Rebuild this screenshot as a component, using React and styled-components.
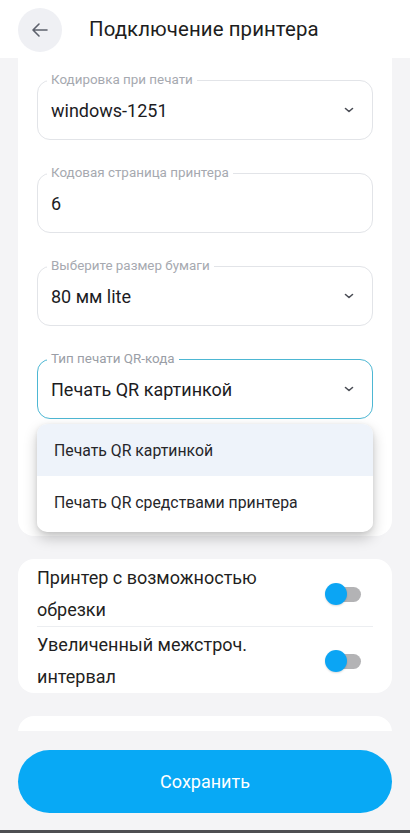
import React from "react";
import styled, { createGlobalStyle } from "styled-components";

const GlobalStyle = createGlobalStyle`
  html, body {
    margin: 0;
    padding: 0;
    background: #f4f4f6;
  }
  body {
    font-family: Roboto, "Noto Sans", "Liberation Sans", sans-serif;
    color: #1f1f22;
  }
`;

const Screen = styled.div`
  width: 410px;
  height: 833px;
  display: flex;
  flex-direction: column;
  background: #f4f4f6;
  overflow: hidden;
`;

const Header = styled.div`
  height: 58px;
  flex-shrink: 0;
  background: #ffffff;
  display: flex;
  align-items: center;
  padding: 0 18px;
  gap: 27px;
  box-sizing: border-box;
`;

const BackButton = styled.button`
  width: 44px;
  height: 44px;
  border-radius: 50%;
  border: none;
  background: #eff0f4;
  display: flex;
  align-items: center;
  justify-content: center;
  padding: 0;
  margin-top: 2px;
`;

const Title = styled.div`
  font-size: 20.4px;
  color: #1d1d20;
  letter-spacing: 0.1px;
`;

const Scroll = styled.div`
  flex: 1;
  overflow: hidden;
  display: flex;
  flex-direction: column;
  gap: 23px;
  padding: 0 18px;
`;

const Card = styled.div`
  background: #ffffff;
  border-radius: ${(p) => (p.$flatTop ? "0 0 16px 16px" : "16px")};
  padding: 0 19px;
  flex-shrink: 0;
  display: flex;
  flex-direction: column;
`;

const FormCard = styled(Card)`
  padding: 14px 19px 117px;
  gap: 25px;
`;

const FieldWrap = styled.div`
  position: relative;
`;

const Fieldset = styled.fieldset`
  margin: 0;
  padding: 0 14px 7px 13px;
  border: 1px solid ${(p) => (p.$focused ? "#4db7d3" : "#e2e4e8")};
  border-radius: 13px;
  min-width: 0;
`;

const Legend = styled.legend`
  padding: 0 4px;
  margin-left: -4px;
  font-size: 13.4px;
  line-height: 16px;
  color: ${(p) => (p.$focused ? "#9a9ea6" : "#a6a9b0")};
`;

const ValueRow = styled.div`
  height: 44px;
  display: flex;
  align-items: center;
  justify-content: space-between;
  font-size: 18px;
  color: #1c1c1f;
`;

const Menu = styled.div`
  position: absolute;
  left: 0;
  right: 0;
  top: calc(100% + 5px);
  background: #ffffff;
  border-radius: 10px;
  box-shadow: 0 6px 14px rgba(0, 0, 0, 0.22), 0 1px 4px rgba(0, 0, 0, 0.08);
  overflow: hidden;
  z-index: 2;
  padding-bottom: 4px;
`;

const MenuItem = styled.div`
  height: 52px;
  display: flex;
  align-items: center;
  padding-left: 17px;
  font-size: 15.8px;
  color: #26262a;
  background: ${(p) => (p.$active ? "#eef3fa" : "#ffffff")};
`;

const SwitchCard = styled(Card)`
  padding: 1px 19px 0;
`;

const SwitchRow = styled.div`
  display: flex;
  align-items: center;
  justify-content: space-between;
  padding-top: 2px;
  border-top: ${(p) => (p.$divider ? "1px solid #eceef1" : "none")};
`;

const SwitchLabel = styled.div`
  font-size: 18px;
  line-height: 32px;
  color: #1f1f22;
  width: 260px;
`;

const Toggle = styled.div`
  position: relative;
  width: 33px;
  height: 15px;
  border-radius: 8px;
  background: #b3b3b5;
  margin-right: 12px;
  flex-shrink: 0;
`;

const Thumb = styled.div`
  position: absolute;
  left: -3px;
  top: 50%;
  width: 22px;
  height: 22px;
  margin-top: -11px;
  border-radius: 50%;
  background: #0ba5f4;
  box-shadow: 0 1px 2px rgba(0, 0, 0, 0.15);
`;

const Footer = styled.div`
  flex-shrink: 0;
  height: 99px;
  padding: 19px 18px 0;
  box-sizing: border-box;
  background: #f4f4f6;
`;

const SaveButton = styled.button`
  width: 100%;
  height: 63px;
  border: none;
  border-radius: 32px;
  background: #08a9f5;
  color: #ffffff;
  font-family: Roboto, "Liberation Sans", sans-serif;
  font-size: 18px;
`;

const NavStrip = styled.div`
  height: 3px;
  flex-shrink: 0;
  background: #4e4f52;
`;

const Chevron = () => (
  <svg width="12" height="8" viewBox="0 0 12 8" style={{ marginRight: 3 }}>
    <path d="M2.5 2.5 L6 5.5 L9.5 2.5" fill="none" stroke="#4a4d55" strokeWidth="1.6" strokeLinecap="round" strokeLinejoin="round" />
  </svg>
);

const fields = [
  { label: "Кодировка при печати", value: "windows-1251", select: true },
  { label: "Кодовая страница принтера", value: "6" },
  { label: "Выберите размер бумаги", value: "80 мм lite", select: true },
  { label: "Тип печати QR-кода", value: "Печать QR картинкой", select: true, focused: true },
];

const options = ["Печать QR картинкой", "Печать QR средствами принтера"];

const switches = [
  "Принтер с возможностью обрезки",
  "Увеличенный межстроч. интервал",
];

export default function App() {
  return (
    <Screen>
      <GlobalStyle />
      <Header>
        <BackButton>
          <svg width="20" height="20" viewBox="0 0 20 20">
            <path d="M17 10 H3.5 M9 4 L3 10 L9 16" fill="none" stroke="#5d616c" strokeWidth="1.6" strokeLinecap="round" strokeLinejoin="round" />
          </svg>
        </BackButton>
        <Title>Подключение принтера</Title>
      </Header>
      <Scroll>
        <FormCard $flatTop>
          {fields.map((f) => (
            <FieldWrap key={f.label}>
              <Fieldset $focused={f.focused}>
                <Legend $focused={f.focused}>{f.label}</Legend>
                <ValueRow>
                  <span>{f.value}</span>
                  {f.select && <Chevron />}
                </ValueRow>
              </Fieldset>
              {f.focused && (
                <Menu>
                  {options.map((o, i) => (
                    <MenuItem key={o} $active={i === 0}>{o}</MenuItem>
                  ))}
                </Menu>
              )}
            </FieldWrap>
          ))}
        </FormCard>
        <SwitchCard>
          {switches.map((s, i) => (
            <SwitchRow key={s} $divider={i > 0}>
              <SwitchLabel>{s}</SwitchLabel>
              <Toggle>
                <Thumb />
              </Toggle>
            </SwitchRow>
          ))}
        </SwitchCard>
        <Card style={{ height: 120 }} />
      </Scroll>
      <Footer>
        <SaveButton>Сохранить</SaveButton>
      </Footer>
      <NavStrip />
    </Screen>
  );
}
